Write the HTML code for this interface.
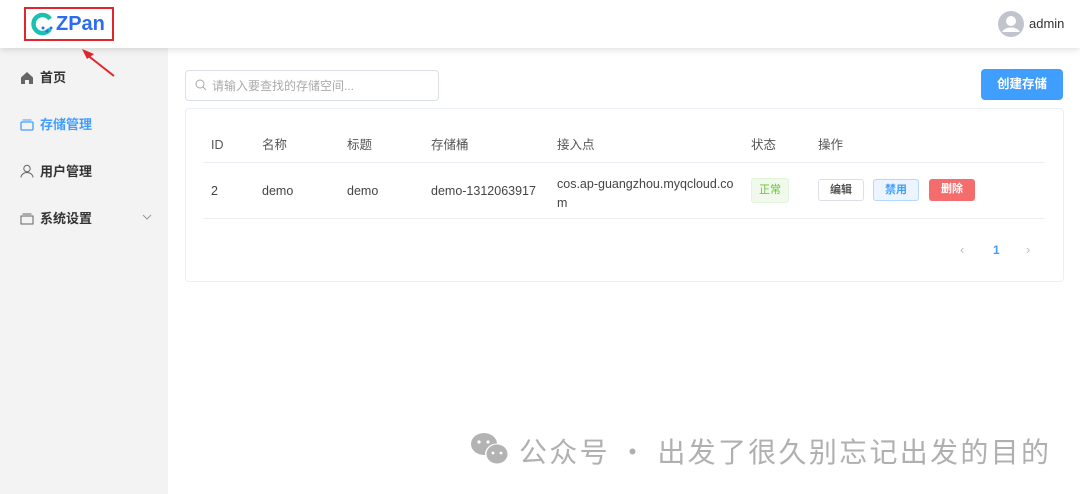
<!DOCTYPE html><html><head><style>
body{margin:0;width:1080px;height:494px;background:#fff;font-family:"Liberation Sans","Noto Sans CJK SC",sans-serif;position:relative;overflow:hidden;color:#333}
.hdr{position:absolute;left:0;top:0;width:1080px;height:48px;background:#fff;box-shadow:0 2px 6px rgba(0,0,0,.12);z-index:2}
.side{position:absolute;left:0;top:48px;width:168px;height:446px;background:#f3f3f3}
.mi{position:absolute;left:20px;font-size:13px;font-weight:bold;color:#333;line-height:16px}
.mi svg{vertical-align:-2px;margin-right:6px}
.abs{position:absolute}
.th{position:absolute;top:137px;font-size:12.5px;color:#555;line-height:16px}
.td{position:absolute;font-size:12.5px;color:#444}
.btn{position:absolute;top:179px;height:22px;width:46px;box-sizing:border-box;border-radius:3px;font-size:11px;text-align:center;line-height:20px;font-weight:bold}
</style></head><body>
<div class="hdr">
 <div class="abs" style="left:24px;top:7px;width:90px;height:34px;border:2px solid #e0262a;box-sizing:border-box"></div>
 <svg class="abs" style="left:30px;top:12px" width="26" height="24"><path d="M20 7A9 9 0 1 0 20 17" stroke="#1ac1b0" stroke-width="4.5" fill="none"/><circle cx="13" cy="16" r="1.5" fill="#2a6fe8"/><circle cx="17" cy="19" r="1.5" fill="#2a6fe8"/><circle cx="21" cy="16" r="1.5" fill="#2a6fe8"/></svg>
 <div class="abs" style="left:56px;top:13px;font-size:20px;line-height:22px;font-weight:bold;color:#2d6bef">ZPan</div>
 <svg class="abs" style="left:998px;top:11px" width="26" height="26"><circle cx="13" cy="13" r="13" fill="#c0c4cc"/><circle cx="13" cy="10" r="5" fill="#fff"/><path d="M4 21a10 8 0 0 1 18 0" fill="#fff"/></svg>
 <div class="abs" style="left:1029px;top:16px;font-size:13px;color:#333">admin</div>
</div>
<svg class="abs" style="left:80px;top:46px;z-index:3" width="36" height="32"><path d="M34 30L6 8" stroke="#e0262a" stroke-width="2"/><path d="M2 3L14 8L7 13Z" fill="#e0262a"/></svg>
<div class="side">
 <div class="mi" style="top:22px"><svg width="14" height="13"><path d="M7 1L1 6.5V13H5V9H9V13H13V6.5Z" fill="#666"/></svg>首页</div>
 <div class="mi" style="top:69px;color:#409eff"><svg width="14" height="13"><rect x="1" y="4" width="12" height="8" rx="1" stroke="#409eff" fill="none" stroke-width="1.3"/><path d="M2.5 2H11.5" stroke="#409eff"/></svg>存储管理</div>
 <div class="mi" style="top:116px"><svg width="14" height="14"><circle cx="7" cy="4.5" r="3.2" stroke="#666" fill="none"/><path d="M1 13.5a6 5 0 0 1 12 0" stroke="#666" fill="none"/></svg>用户管理</div>
 <div class="mi" style="top:163px"><svg width="14" height="13"><rect x="1" y="4" width="12" height="8" stroke="#666" fill="none"/><path d="M2.5 2H11.5" stroke="#666"/></svg>系统设置</div>
 <svg class="abs" style="left:142px;top:166px" width="10" height="6"><path d="M1 1L5 5L9 1" stroke="#999" fill="none"/></svg>
</div>
<div class="abs" style="left:185px;top:70px;width:252px;height:29px;border:1px solid #dcdfe6;border-radius:4px"></div>
<svg class="abs" style="left:195px;top:79px" width="12" height="12"><circle cx="5" cy="5" r="4" stroke="#aaa" fill="none"/><path d="M8 8L11 11" stroke="#aaa"/></svg>
<div class="abs" style="left:212px;top:78px;font-size:12px;color:#aaa;line-height:16px">请输入要查找的存储空间...</div>
<div class="abs" style="left:981px;top:69px;width:82px;height:31px;background:#409eff;border-radius:4px;color:#fff;font-size:12.5px;font-weight:bold;text-align:center;line-height:31px">创建存储</div>
<div class="abs" style="left:185px;top:108px;width:877px;height:172px;border:1px solid #ebeef5;border-radius:4px"></div>
<div class="th" style="left:211px">ID</div><div class="th" style="left:262px">名称</div><div class="th" style="left:347px">标题</div><div class="th" style="left:431px">存储桶</div><div class="th" style="left:557px">接入点</div><div class="th" style="left:751px">状态</div><div class="th" style="left:818px">操作</div>
<div class="abs" style="left:203px;top:162px;width:842px;border-top:1px solid #ebeef5"></div>
<div class="abs" style="left:203px;top:218px;width:842px;border-top:1px solid #ebeef5"></div>
<div class="td" style="left:211px;top:184px">2</div><div class="td" style="left:262px;top:184px">demo</div><div class="td" style="left:347px;top:184px">demo</div><div class="td" style="left:431px;top:184px">demo-1312063917</div>
<div class="td" style="left:557px;top:175px;width:180px;line-height:19px">cos.ap-guangzhou.myqcloud.co<br>m</div>
<div class="abs" style="left:751px;top:178px;width:38px;height:25px;background:#f0f9eb;border:1px solid #e1f3d8;box-sizing:border-box;border-radius:3px;font-size:11px;color:#67c23a;text-align:center;line-height:23px">正常</div>
<div class="btn" style="left:818px;border:1px solid #dcdfe6;color:#555">编辑</div>
<div class="btn" style="left:873px;border:1px solid #b3d8ff;background:#ecf5ff;color:#409eff">禁用</div>
<div class="btn" style="left:929px;background:#f56c6c;color:#fff">删除</div>
<div class="abs" style="left:960px;top:242px;font-size:13px;color:#bbb">‹</div>
<div class="abs" style="left:993px;top:243px;font-size:12px;color:#409eff;font-weight:bold">1</div>
<div class="abs" style="left:1026px;top:242px;font-size:13px;color:#bbb">›</div>
<svg class="abs" style="left:470px;top:432px" width="42" height="36"><ellipse cx="14" cy="12" rx="13" ry="11" fill="#b3b3b3"/><ellipse cx="27" cy="22" rx="12" ry="10.5" fill="#fff"/><ellipse cx="27" cy="22" rx="10.5" ry="9.5" fill="#b3b3b3"/><circle cx="9" cy="10" r="1.6" fill="#fff"/><circle cx="18" cy="10" r="1.6" fill="#fff"/><circle cx="23" cy="21" r="1.4" fill="#fff"/><circle cx="31" cy="21" r="1.4" fill="#fff"/></svg>
<div class="abs" style="left:519px;top:431px;font-size:28px;line-height:40px;color:#b0b0b0;letter-spacing:2.3px;font-family:'Noto Sans CJK SC',sans-serif">公众号 · 出发了很久别忘记出发的目的</div>
</body></html>
